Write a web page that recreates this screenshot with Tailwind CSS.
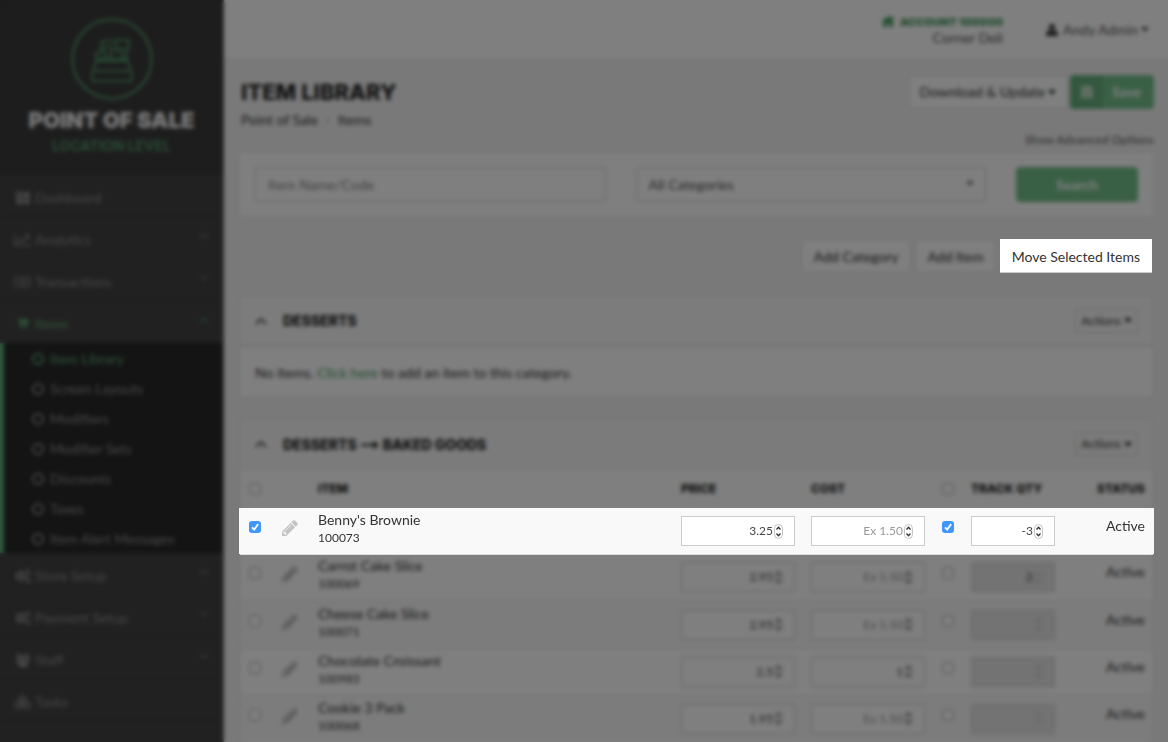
<!DOCTYPE html>
<html lang="en">
<head>
    <meta charset="UTF-8">
    <meta name="viewport" content="width=device-width, initial-scale=1.0">
    <title>Item Library</title>
    <script src="https://cdn.jsdelivr.net/npm/@tailwindcss/browser@4"></script>
</head>
<body class="h-screen overflow-hidden bg-[#f3f3f3] font-['Lato',sans-serif] text-sm text-[#333]">

    <!-- Icon sprite -->
    <svg class="hidden" xmlns="http://www.w3.org/2000/svg">
        <symbol id="chevron-down" viewBox="0 0 10 10"><path d="M1 3l4 4 4-4" fill="none" stroke="currentColor" stroke-width="1.5"/></symbol>
        <symbol id="chevron-up" viewBox="0 0 12 12"><path d="M1 9l5-5 5 5" fill="none" stroke="currentColor" stroke-width="2"/></symbol>
        <symbol id="caret" viewBox="0 0 8 5"><path d="M0 0h8L4 5z" fill="currentColor"/></symbol>
        <symbol id="circle" viewBox="0 0 12 12"><circle cx="6" cy="6" r="5" fill="none" stroke="currentColor" stroke-width="2"/></symbol>
        <symbol id="pencil" viewBox="0 0 1536 1536"><path fill="currentColor" d="M363 1408l91-91-235-235-91 91v107h128v128h107zm523-928q0-22-22-22-10 0-17 7l-542 542q-7 7-7 17 0 22 22 22 10 0 17-7l542-542q7-7 7-17zm-54-192l416 416-832 832H0v-416zm683 96q0 53-37 90l-166 166-416-416 166-165q36-38 90-38 53 0 91 38l235 234q37 39 37 91z"/></symbol>
        <symbol id="spinner" viewBox="0 0 9 15"><rect x=".5" y=".5" width="8" height="14" rx="4" fill="#fff" stroke="#c4c4c4"/><path d="M2.500 5.500l2-2.200 2 2.200M2.500 9.500l2 2.200 2-2.200" fill="none" stroke="#333" stroke-width="1.300"/></symbol>
        <symbol id="check" viewBox="0 0 12 12"><path d="M3 6.300l2.200 2.300L9.200 3" fill="none" stroke="#fff" stroke-width="1.800"/></symbol>
        <symbol id="gears" viewBox="0 0 16 14"><circle cx="5.500" cy="7" r="3.400" fill="none" stroke="currentColor" stroke-width="3"/><circle cx="13" cy="3" r="1.800" fill="none" stroke="currentColor" stroke-width="1.600"/><circle cx="13" cy="11" r="1.800" fill="none" stroke="currentColor" stroke-width="1.600"/></symbol>
    </svg>

    <div class="flex h-full">

        <!-- Sidebar -->
        <aside class="w-56 shrink-0 border-r border-[#777] bg-[#424242] text-[#8c8c8c]">
            <div class="flex h-[175px] flex-col items-center bg-[#3a3a3a] pt-[18px]">
                <svg class="h-[82px] w-[82px] text-[#529468]" viewBox="0 0 82 82" fill="none" stroke="currentColor" stroke-width="2">
                    <circle cx="41" cy="41" r="39.500" stroke-width="2.500"/>
                    <path d="M26 41L21 56v5q0 2 2 2h36q2 0 2-2v-5L56 41z"/>
                    <path d="M21 53h40M24 43h34M25 41v-6h4l2-12h12M45 22h13v9H45zM45 32l11 8M56 32l-2 8M33 29h8v8h-8z"/>
                </svg>
                <h2 class="mt-[5px] font-['Inter',sans-serif] text-[22px] leading-[30px] font-black text-[#f0f0f0]">POINT OF SALE</h2>
                <p class="mt-px font-['Inter',sans-serif] text-sm leading-5 font-bold text-[#529468]">LOCATION LEVEL</p>
            </div>
            <nav>
                <a href="#" class="flex h-[42px] items-center border-b border-[#3a3a3a] pt-1 pl-4">
                    <svg class="mr-[5px] h-3 w-[14px]" viewBox="0 0 14 12" fill="currentColor"><path d="M0 0h6.500v5.500H0zM7.500 0H14v5.500H7.500zM0 6.500h6.500V12H0zM7.500 6.500H14V12H7.500z"/></svg>
                    Dashboard
                </a>
                <a href="#" class="flex h-[42px] items-center border-b border-[#3a3a3a] pt-1 pr-[14px] pl-[14px]">
                    <svg class="mr-1 h-3 w-[17px]" viewBox="0 0 17 12" fill="none" stroke="currentColor" stroke-width="1.500"><path d="M1 0v11h16M3 9l4-4 2 2 6-6M11.500 1H15v3.500"/></svg>
                    Analytics
                    <svg class="mb-2 ml-auto h-[10px] w-[10px] text-[#6e6e6e]"><use href="#chevron-down"/></svg>
                </a>
                <a href="#" class="flex h-[42px] items-center border-b border-[#3a3a3a] pt-1 pr-[14px] pl-[14px]">
                    <svg class="mr-1 h-3 w-[17px]" viewBox="0 0 17 12" fill="none" stroke="currentColor"><path d="M1 1h15v10H1zM8.500 3.500v5M3 3.500v5M14 3.500v5"/><ellipse cx="8.500" cy="6" rx="2.500" ry="3.500"/></svg>
                    Transactions
                    <svg class="mb-2 ml-auto h-[10px] w-[10px] text-[#6e6e6e]"><use href="#chevron-down"/></svg>
                </a>
                <a href="#" class="flex h-[42px] items-center pt-1 pr-[14px] pl-[17px] text-[#5aa573]">
                    <svg class="mr-1.5 h-3 w-3" viewBox="0 0 12 12" fill="currentColor"><path d="M0 0h2.500l.4 1.300H12L11 6.500 4 7.300l.2 1H11v1H3.300L1.700 1H0z"/><circle cx="4.300" cy="11" r="1"/><circle cx="10" cy="11" r="1"/></svg>
                    Items
                    <svg class="mb-2 ml-auto h-[10px] w-[10px] text-[#4f8261]"><use href="#chevron-up"/></svg>
                </a>
                <div class="border-l-4 border-[#5fae79] bg-[#282828]">
                    <a href="#" class="flex h-[30px] items-center gap-1.5 pt-0.5 pl-7 text-[#5aa573]"><svg class="h-3 w-3"><use href="#circle"/></svg>Item Library</a>
                    <a href="#" class="flex h-[30px] items-center gap-1.5 pt-0.5 pl-7"><svg class="h-3 w-3"><use href="#circle"/></svg>Screen Layouts</a>
                    <a href="#" class="flex h-[30px] items-center gap-1.5 pt-0.5 pl-7"><svg class="h-3 w-3"><use href="#circle"/></svg>Modifiers</a>
                    <a href="#" class="flex h-[30px] items-center gap-1.5 pt-0.5 pl-7"><svg class="h-3 w-3"><use href="#circle"/></svg>Modifier Sets</a>
                    <a href="#" class="flex h-[30px] items-center gap-1.5 pt-0.5 pl-7"><svg class="h-3 w-3"><use href="#circle"/></svg>Discounts</a>
                    <a href="#" class="flex h-[30px] items-center gap-1.5 pt-0.5 pl-7"><svg class="h-3 w-3"><use href="#circle"/></svg>Taxes</a>
                    <a href="#" class="flex h-[30px] items-center gap-1.5 pt-0.5 pl-7"><svg class="h-3 w-3"><use href="#circle"/></svg>Item Alert Messages</a>
                </div>
                <a href="#" class="flex h-[42px] items-center border-b border-[#3a3a3a] pt-1 pr-[14px] pl-[15px]">
                    <svg class="mr-1 h-[14px] w-4"><use href="#gears"/></svg>
                    Store Setup
                    <svg class="mb-2 ml-auto h-[10px] w-[10px] text-[#6e6e6e]"><use href="#chevron-down"/></svg>
                </a>
                <a href="#" class="flex h-[42px] items-center border-b border-[#3a3a3a] pt-1 pr-[14px] pl-[15px]">
                    <svg class="mr-1 h-[14px] w-4"><use href="#gears"/></svg>
                    Payment Setup
                    <svg class="mb-2 ml-auto h-[10px] w-[10px] text-[#6e6e6e]"><use href="#chevron-down"/></svg>
                </a>
                <a href="#" class="flex h-[42px] items-center border-b border-[#3a3a3a] pt-1 pr-[14px] pl-[15px]">
                    <svg class="mr-1 h-[14px] w-4" viewBox="0 0 16 14" fill="currentColor"><circle cx="3.500" cy="2.500" r="2"/><circle cx="12.500" cy="2.500" r="2"/><circle cx="8" cy="5" r="2.800"/><path d="M1 5h3l1 3-1 1H2Q1 8 1 5zM15 5h-3l-1 3 1 1h2q1-1 1-4zM3 13q0-5 2.500-5h5Q13 8 13 13l-1 1H4z"/></svg>
                    Staff
                    <svg class="mb-2 ml-auto h-[10px] w-[10px] text-[#6e6e6e]"><use href="#chevron-down"/></svg>
                </a>
                <a href="#" class="flex h-[42px] items-center border-b border-[#3a3a3a] pt-1 pr-[14px] pl-[14px]">
                    <svg class="mr-1 h-[14px] w-[17px]" viewBox="0 0 17 14" fill="none" stroke="currentColor" stroke-width="1.800"><path d="M8.500 1l3 1.500v3.500l-3 1.500-3-1.500V2.500zM4.500 7l3 1.500V12l-3 1.300-3.300-1.300V8.500zM12.500 7l3.300 1.500V12l-3.300 1.300L9.500 12V8.500z"/></svg>
                    Tasks
                </a>
            </nav>
        </aside>

        <div class="min-w-0 flex-1">

            <!-- Top bar -->
            <header class="flex h-[60px] items-center justify-end gap-[43px] border-b border-[#e4e4e4] bg-white pr-[19px]">
                <div class="text-right">
                    <a href="#" class="flex items-center justify-end gap-1.5 font-['Inter',sans-serif] text-[11px] leading-4 font-black text-[#4aa064]">
                        <svg class="h-[11px] w-3" viewBox="0 0 12 11" fill="currentColor"><path d="M6 0l2.500 2V.5H11V4l1 1v1h-1v5H7V7H5v4H1V6H0V5z"/></svg>
                        ACCOUNT 100000
                    </a>
                    <div class="leading-4 text-[#555]">Corner Deli</div>
                </div>
                <button class="flex items-center text-[#555]">
                    <svg class="mr-[5px] h-3 w-3 text-[#333]" viewBox="0 0 12 12" fill="currentColor"><circle cx="6" cy="3" r="3"/><path d="M0 12q0-5 3-6l3 1 3-1q3 1 3 6z"/></svg>
                    Andy Admin
                    <svg class="ml-[3px] h-[5px] w-2"><use href="#caret"/></svg>
                </button>
            </header>

            <main class="pt-[15px] pr-[14px] pl-[15px]">
                <div class="flex items-start justify-between">
                    <div class="pl-0.5">
                        <h1 class="font-['Inter',sans-serif] text-[22px] leading-[34px] font-extrabold text-[#222]">ITEM LIBRARY</h1>
                        <nav class="flex items-center leading-[22px]">
                            <a href="#">Point of Sale</a>
                            <svg class="mx-2 h-2 w-1" viewBox="0 0 4 8" fill="none" stroke="#aaa"><path d="M0 0l3 4-3 4"/></svg>
                            <a href="#">Items</a>
                        </nav>
                    </div>
                    <div class="flex gap-0.5">
                        <button class="flex h-[34px] items-center gap-[3px] rounded-sm border border-[#d8d8d8] bg-white px-[11px]">
                            Download &amp; Update
                            <svg class="h-[5px] w-2"><use href="#caret"/></svg>
                        </button>
                        <button class="flex h-[34px] w-[84px] items-center overflow-hidden rounded-sm bg-[#73c08a] font-bold text-white">
                            <span class="flex h-full w-[33px] items-center justify-center bg-[#67b07e]">
                                <svg class="h-3 w-3" viewBox="0 0 12 12" fill="none" stroke="currentColor" stroke-width="1.300"><path d="M1 1h8l2 2v8H1zM3.500 1v3.500H8V1M3 11V7h6v4"/></svg>
                            </span>
                            <span class="flex-1 pr-1 text-center">Save</span>
                        </button>
                    </div>
                </div>
                <div class="text-right text-xs leading-[18px] text-[#555]"><a href="#">Show Advanced Options</a></div>

                <!-- Search -->
                <form class="mt-[3px] flex h-[65px] items-center gap-[30px] border border-[#e8e8e8] bg-white px-[15px]">
                    <div class="flex-1">
                        <input type="text" aria-label="Item Name/Code" placeholder="Item Name/Code" class="h-[35px] w-full border border-[#ccc] px-3 placeholder:text-[#888]">
                    </div>
                    <div class="relative flex-1">
                        <select aria-label="Category" class="h-[35px] w-full appearance-none border border-[#ccc] bg-white px-3 text-[#555]">
                            <option>All Categories</option>
                        </select>
                        <svg class="pointer-events-none absolute top-[14px] right-3 h-[5px] w-2 text-[#777]"><use href="#caret"/></svg>
                    </div>
                    <button type="button" class="h-[35px] w-[122px] rounded-sm bg-[#73c08a] font-bold text-white">Search</button>
                </form>

                <div class="mt-[22px] flex items-center justify-end gap-1 pr-0.5">
                    <button class="h-[34px] rounded-sm border border-[#ddd] bg-white px-3 pt-0.5">Add Category</button>
                    <button class="h-[34px] rounded-sm border border-[#ddd] bg-white px-[11px] pt-0.5">Add Item</button>
                    <button class="relative z-20 h-[34px] border-b border-[#ccc] bg-white px-3 pt-0.5">Move Selected Items</button>
                </div>

                <!-- Desserts -->
                <section class="mt-[22px] border border-[#e0e0e0] bg-white">
                    <div class="flex h-[51px] items-center border-b-2 border-[#e2e2e2] bg-[#f9f9f9] px-[15px]">
                        <svg class="h-3 w-3 text-[#555]"><use href="#chevron-up"/></svg>
                        <h3 class="ml-4 pt-px font-['Inter',sans-serif] font-extrabold text-[#1c1c1c]">DESSERTS</h3>
                        <button class="ml-auto flex h-[24px] items-center gap-[3px] border border-[#d4d4d4] px-[5px] text-xs">Actions<svg class="h-[5px] w-2"><use href="#caret"/></svg></button>
                    </div>
                    <p class="px-[15px] pt-4 pb-[14px] leading-5">No items. <a href="#" class="text-[#4aa064]">Click here</a> to add an item to this category.</p>
                </section>

                <!-- Baked goods -->
                <section class="mt-5 border border-[#e0e0e0] bg-white">
                    <div class="flex h-[51px] items-center border-b border-[#eee] bg-[#f7f7f7] px-[15px]">
                        <svg class="h-3 w-3 text-[#555]"><use href="#chevron-up"/></svg>
                        <h3 class="ml-4 flex items-center gap-1 pt-px font-['Inter',sans-serif] font-extrabold text-[#1c1c1c]">
                            DESSERTS
                            <svg class="h-2 w-[18px]" viewBox="0 0 18 8" fill="currentColor"><path d="M0 3h12V0l6 4-6 4V5H0z"/></svg>
                            BAKED GOODS
                        </h3>
                        <button class="ml-auto flex h-[24px] items-center gap-[3px] border border-[#d4d4d4] px-[5px] text-xs">Actions<svg class="h-[5px] w-2"><use href="#caret"/></svg></button>
                    </div>
                    <table class="w-full table-fixed border-collapse">
                        <colgroup>
                            <col class="w-[35px]"><col class="w-[35px]"><col><col class="w-[130px]"><col class="w-[130px]"><col class="w-[30px]"><col class="w-[100px]"><col class="w-[90px]">
                        </colgroup>
                        <thead>
                            <tr class="h-[38px] text-left font-['Inter',sans-serif] text-xs text-[#1c1c1c]">
                                <th class="pl-[9px]"><input type="checkbox" aria-label="Select all" class="block h-3 w-3 appearance-none rounded-[3px] border border-[#aaa] bg-white"></th>
                                <th></th>
                                <th class="pl-2 font-extrabold">ITEM</th>
                                <th class="pl-2 font-extrabold">PRICE</th>
                                <th class="pl-2 font-extrabold">COST</th>
                                <th class="pl-[9px]"><input type="checkbox" aria-label="Track all" class="block h-3 w-3 appearance-none rounded-[3px] border border-[#aaa] bg-white"></th>
                                <th class="pl-2 font-extrabold">TRACK QTY</th>
                                <th class="pr-2 text-right font-extrabold">STATUS</th>
                            </tr>
                        </thead>
                        <tbody>
                            <!-- Spotlit row, sits above the dimmer -->
                            <tr class="relative z-20 h-[46px] bg-[#f9f9f9] align-top shadow-[0_1px_0_#ddd,-1px_0_0_#f9f9f9,1px_0_0_#f9f9f9]">
                                <td class="pt-[13px] pl-[9px]">
                                    <span class="grid h-3 w-3">
                                        <input type="checkbox" checked aria-label="Select Benny's Brownie" class="col-start-1 row-start-1 h-3 w-3 appearance-none rounded-[3px] bg-[#3f97fb]">
                                        <svg class="pointer-events-none col-start-1 row-start-1 h-3 w-3"><use href="#check"/></svg>
                                    </span>
                                </td>
                                <td class="pt-3 pl-[7px]"><a href="#" aria-label="Edit"><svg class="h-4 w-4 text-[#c4c4c4]"><use href="#pencil"/></svg></a></td>
                                <td class="pt-[3px] pl-2 leading-[18px]">Benny's Brownie<div class="text-xs leading-[18px]">100073</div></td>
                                <td class="pt-2 pl-2"><label class="flex h-[30px] w-[114px] items-center border border-[#ccc] bg-white pr-[11px]"><input type="number" aria-label="Price" value="3.25" class="w-0 flex-1 text-right text-xs text-[#444] [&::-webkit-inner-spin-button]:appearance-none"><svg class="ml-px h-[15px] w-[9px]"><use href="#spinner"/></svg></label></td>
                                <td class="pt-2 pl-2"><label class="flex h-[30px] w-[114px] items-center border border-[#ccc] bg-white pr-[11px]"><input type="number" aria-label="Cost" placeholder="Ex 1.50" class="w-0 flex-1 text-right text-xs text-[#444] placeholder:text-[#999] [&::-webkit-inner-spin-button]:appearance-none"><svg class="ml-px h-[15px] w-[9px]"><use href="#spinner"/></svg></label></td>
                                <td class="pt-[13px] pl-[9px]">
                                    <span class="grid h-3 w-3">
                                        <input type="checkbox" checked aria-label="Track quantity" class="col-start-1 row-start-1 h-3 w-3 appearance-none rounded-[3px] bg-[#3f97fb]">
                                        <svg class="pointer-events-none col-start-1 row-start-1 h-3 w-3"><use href="#check"/></svg>
                                    </span>
                                </td>
                                <td class="pt-2 pl-2"><label class="flex h-[30px] w-[84px] items-center border border-[#ccc] bg-white pr-[11px]"><input type="number" aria-label="Quantity" value="-3" class="w-0 flex-1 text-right text-xs text-[#444] [&::-webkit-inner-spin-button]:appearance-none"><svg class="ml-px h-[15px] w-[9px]"><use href="#spinner"/></svg></label></td>
                                <td class="pt-2 pr-2 text-right">Active</td>
                            </tr>
                            <tr class="h-[47px] border-b border-[#e4e4e4] align-top">
                                <td class="pt-[13px] pl-[9px]"><input type="checkbox" aria-label="Select Carrot Cake Slice" class="block h-3 w-3 appearance-none rounded-[3px] border border-[#aaa] bg-white"></td>
                                <td class="pt-3 pl-[7px]"><a href="#" aria-label="Edit"><svg class="h-4 w-4 text-[#b5b5b5]"><use href="#pencil"/></svg></a></td>
                                <td class="pt-[3px] pl-2 leading-[18px]">Carrot Cake Slice<div class="text-xs leading-[18px]">100069</div></td>
                                <td class="pt-2 pl-2"><label class="flex h-[30px] w-[114px] items-center border border-[#ccc] bg-white pr-[11px]"><input type="number" aria-label="Price" value="2.95" class="w-0 flex-1 text-right text-xs text-[#444] [&::-webkit-inner-spin-button]:appearance-none"><svg class="ml-px h-[15px] w-[9px]"><use href="#spinner"/></svg></label></td>
                                <td class="pt-2 pl-2"><label class="flex h-[30px] w-[114px] items-center border border-[#ccc] bg-white pr-[11px]"><input type="number" aria-label="Cost" placeholder="Ex 1.50" class="w-0 flex-1 text-right text-xs text-[#444] placeholder:text-[#999] [&::-webkit-inner-spin-button]:appearance-none"><svg class="ml-px h-[15px] w-[9px]"><use href="#spinner"/></svg></label></td>
                                <td class="pt-[13px] pl-[9px]"><input type="checkbox" aria-label="Track quantity" class="block h-3 w-3 appearance-none rounded-[3px] border border-[#aaa] bg-white"></td>
                                <td class="pt-2 pl-2"><label class="flex h-[30px] w-[84px] items-center border border-[#ccc] bg-[#e6e6e6] pr-[11px]"><input type="number" disabled aria-label="Quantity" value="2" class="w-0 flex-1 text-right text-xs text-[#444] [&::-webkit-inner-spin-button]:appearance-none"><svg class="ml-px h-[15px] w-[9px] opacity-30"><use href="#spinner"/></svg></label></td>
                                <td class="pt-2 pr-2 text-right">Active</td>
                            </tr>
                            <tr class="h-[47px] border-b border-[#e4e4e4] bg-[#f9f9f9] align-top">
                                <td class="pt-[13px] pl-[9px]"><input type="checkbox" aria-label="Select Cheese Cake Slice" class="block h-3 w-3 appearance-none rounded-[3px] border border-[#aaa] bg-white"></td>
                                <td class="pt-3 pl-[7px]"><a href="#" aria-label="Edit"><svg class="h-4 w-4 text-[#b5b5b5]"><use href="#pencil"/></svg></a></td>
                                <td class="pt-[3px] pl-2 leading-[18px]">Cheese Cake Slice<div class="text-xs leading-[18px]">100071</div></td>
                                <td class="pt-2 pl-2"><label class="flex h-[30px] w-[114px] items-center border border-[#ccc] bg-white pr-[11px]"><input type="number" aria-label="Price" value="2.95" class="w-0 flex-1 text-right text-xs text-[#444] [&::-webkit-inner-spin-button]:appearance-none"><svg class="ml-px h-[15px] w-[9px]"><use href="#spinner"/></svg></label></td>
                                <td class="pt-2 pl-2"><label class="flex h-[30px] w-[114px] items-center border border-[#ccc] bg-white pr-[11px]"><input type="number" aria-label="Cost" placeholder="Ex 1.50" class="w-0 flex-1 text-right text-xs text-[#444] placeholder:text-[#999] [&::-webkit-inner-spin-button]:appearance-none"><svg class="ml-px h-[15px] w-[9px]"><use href="#spinner"/></svg></label></td>
                                <td class="pt-[13px] pl-[9px]"><input type="checkbox" aria-label="Track quantity" class="block h-3 w-3 appearance-none rounded-[3px] border border-[#aaa] bg-white"></td>
                                <td class="pt-2 pl-2"><label class="flex h-[30px] w-[84px] items-center border border-[#ccc] bg-[#e6e6e6] pr-[11px]"><input type="number" disabled aria-label="Quantity" class="w-0 flex-1 text-right text-xs text-[#444] [&::-webkit-inner-spin-button]:appearance-none"><svg class="ml-px h-[15px] w-[9px] opacity-30"><use href="#spinner"/></svg></label></td>
                                <td class="pt-2 pr-2 text-right">Active</td>
                            </tr>
                            <tr class="h-[47px] border-b border-[#e4e4e4] align-top">
                                <td class="pt-[13px] pl-[9px]"><input type="checkbox" aria-label="Select Chocolate Croissant" class="block h-3 w-3 appearance-none rounded-[3px] border border-[#aaa] bg-white"></td>
                                <td class="pt-3 pl-[7px]"><a href="#" aria-label="Edit"><svg class="h-4 w-4 text-[#b5b5b5]"><use href="#pencil"/></svg></a></td>
                                <td class="pt-[3px] pl-2 leading-[18px]">Chocolate Croissant<div class="text-xs leading-[18px]">100983</div></td>
                                <td class="pt-2 pl-2"><label class="flex h-[30px] w-[114px] items-center border border-[#ccc] bg-white pr-[11px]"><input type="number" aria-label="Price" value="2.5" class="w-0 flex-1 text-right text-xs text-[#444] [&::-webkit-inner-spin-button]:appearance-none"><svg class="ml-px h-[15px] w-[9px]"><use href="#spinner"/></svg></label></td>
                                <td class="pt-2 pl-2"><label class="flex h-[30px] w-[114px] items-center border border-[#ccc] bg-white pr-[11px]"><input type="number" aria-label="Cost" value="1" class="w-0 flex-1 text-right text-xs text-[#444] [&::-webkit-inner-spin-button]:appearance-none"><svg class="ml-px h-[15px] w-[9px]"><use href="#spinner"/></svg></label></td>
                                <td class="pt-[13px] pl-[9px]"><input type="checkbox" aria-label="Track quantity" class="block h-3 w-3 appearance-none rounded-[3px] border border-[#aaa] bg-white"></td>
                                <td class="pt-2 pl-2"><label class="flex h-[30px] w-[84px] items-center border border-[#ccc] bg-[#e6e6e6] pr-[11px]"><input type="number" disabled aria-label="Quantity" class="w-0 flex-1 text-right text-xs text-[#444] [&::-webkit-inner-spin-button]:appearance-none"><svg class="ml-px h-[15px] w-[9px] opacity-30"><use href="#spinner"/></svg></label></td>
                                <td class="pt-2 pr-2 text-right">Active</td>
                            </tr>
                            <tr class="h-[47px] border-b border-[#e4e4e4] bg-[#f9f9f9] align-top">
                                <td class="pt-[13px] pl-[9px]"><input type="checkbox" aria-label="Select Cookie 3 Pack" class="block h-3 w-3 appearance-none rounded-[3px] border border-[#aaa] bg-white"></td>
                                <td class="pt-3 pl-[7px]"><a href="#" aria-label="Edit"><svg class="h-4 w-4 text-[#b5b5b5]"><use href="#pencil"/></svg></a></td>
                                <td class="pt-[3px] pl-2 leading-[18px]">Cookie 3 Pack<div class="text-xs leading-[18px]">100068</div></td>
                                <td class="pt-2 pl-2"><label class="flex h-[30px] w-[114px] items-center border border-[#ccc] bg-white pr-[11px]"><input type="number" aria-label="Price" value="1.95" class="w-0 flex-1 text-right text-xs text-[#444] [&::-webkit-inner-spin-button]:appearance-none"><svg class="ml-px h-[15px] w-[9px]"><use href="#spinner"/></svg></label></td>
                                <td class="pt-2 pl-2"><label class="flex h-[30px] w-[114px] items-center border border-[#ccc] bg-white pr-[11px]"><input type="number" aria-label="Cost" placeholder="Ex 1.50" class="w-0 flex-1 text-right text-xs text-[#444] placeholder:text-[#999] [&::-webkit-inner-spin-button]:appearance-none"><svg class="ml-px h-[15px] w-[9px]"><use href="#spinner"/></svg></label></td>
                                <td class="pt-[13px] pl-[9px]"><input type="checkbox" aria-label="Track quantity" class="block h-3 w-3 appearance-none rounded-[3px] border border-[#aaa] bg-white"></td>
                                <td class="pt-2 pl-2"><label class="flex h-[30px] w-[84px] items-center border border-[#ccc] bg-[#e6e6e6] pr-[11px]"><input type="number" disabled aria-label="Quantity" class="w-0 flex-1 text-right text-xs text-[#444] [&::-webkit-inner-spin-button]:appearance-none"><svg class="ml-px h-[15px] w-[9px] opacity-30"><use href="#spinner"/></svg></label></td>
                                <td class="pt-2 pr-2 text-right">Active</td>
                            </tr>
                        </tbody>
                    </table>
                </section>
            </main>
        </div>
    </div>

    <!-- Dimmer -->
    <div class="fixed inset-0 z-10 bg-black/50 backdrop-blur-[2px]"></div>

</body>
</html>
